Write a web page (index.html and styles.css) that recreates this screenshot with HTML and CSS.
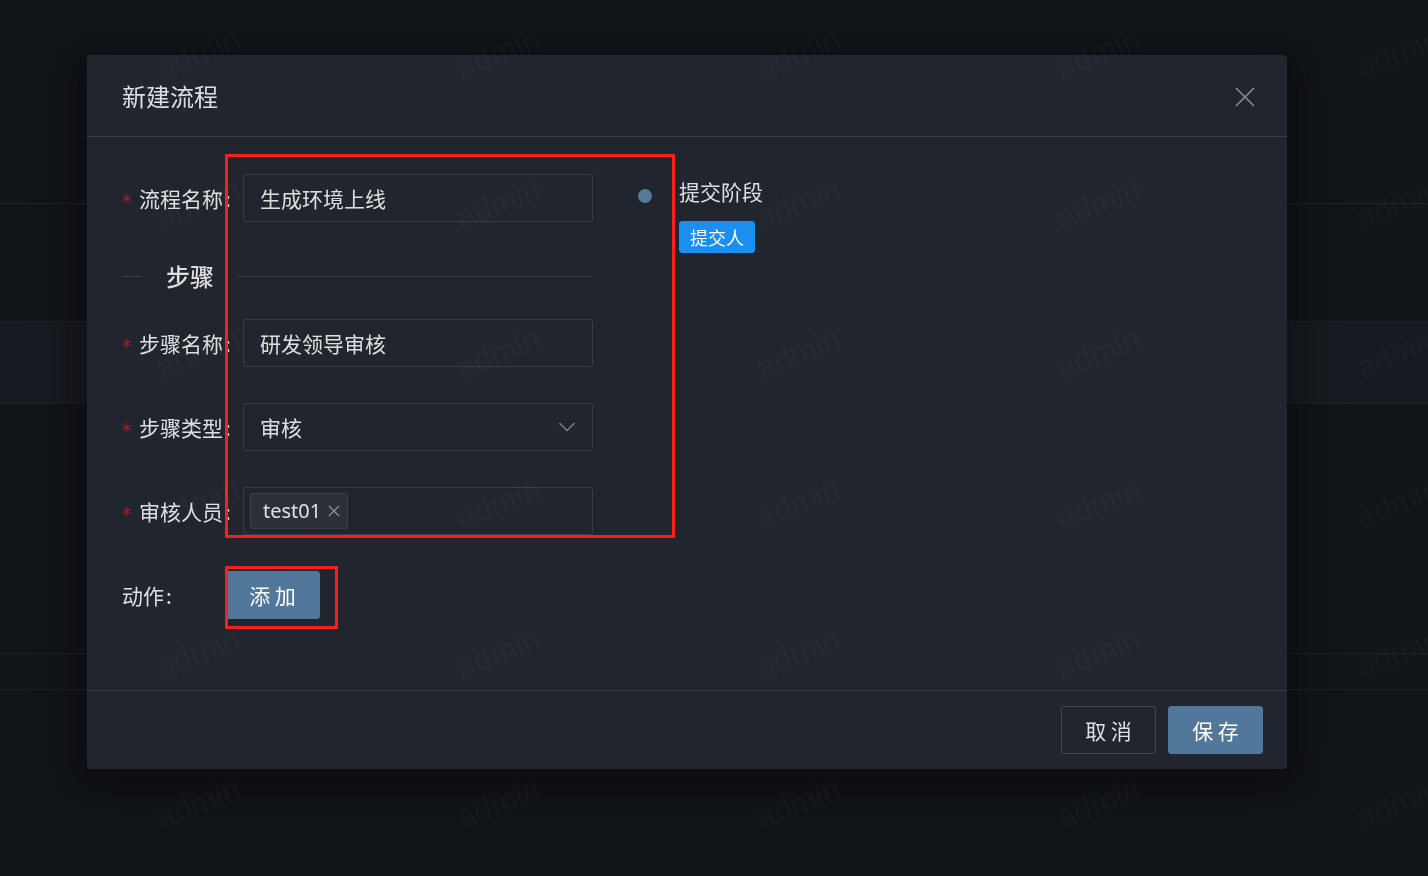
FILE: index.html
```html
<html>
    <head>
        <meta name="viewport" content="width=device-width, initial-scale=1.0">
        <title>新建流程</title>
        <link rel="stylesheet" href="styles.css">
    </head>
    <body>
        <div class="bg-table">
            <div class="bg-row head"></div>
            <div class="bg-row r1"></div>
            <div class="bg-row r2 hover"></div>
            <div class="bg-row r3"></div>
            <div class="bg-row r4"></div>
        </div>

        <div class="mask">
            <div class="modal">
                <div class="modal-header">
                    <div class="modal-title">新建流程</div>
                    <span class="modal-close">
                        <svg width="22" height="22" viewBox="0 0 22 22"><path d="M2 2L20 20M20 2L2 20" stroke="#8a8d93" stroke-width="1.6" fill="none"/></svg>
                    </span>
                </div>
                <div class="modal-body">
                    <div class="left">
                        <div class="form-item">
                            <label class="form-label"><span class="req">*</span>流程名称<span class="colon">:</span></label>
                            <div class="input">生成环境上线</div>
                        </div>

                        <div class="divider">
                            <span class="divider-before"></span>
                            <span class="divider-text">步骤</span>
                            <span class="divider-after"></span>
                        </div>

                        <div class="form-item">
                            <label class="form-label"><span class="req">*</span>步骤名称<span class="colon">:</span></label>
                            <div class="input">研发领导审核</div>
                        </div>
                        <div class="form-item">
                            <label class="form-label"><span class="req">*</span>步骤类型<span class="colon">:</span></label>
                            <div class="input select">
                                <span>审核</span>
                                <svg class="arrow" width="18" height="12" viewBox="0 0 18 12"><path d="M1.5 2L9 9.5L16.5 2" stroke="#7c7f87" stroke-width="1.5" fill="none"/></svg>
                            </div>
                        </div>
                        <div class="form-item">
                            <label class="form-label"><span class="req">*</span>审核人员<span class="colon">:</span></label>
                            <div class="input multi">
                                <span class="sel-tag">test01
                                    <svg width="12" height="12" viewBox="0 0 12 12"><path d="M1 1L11 11M11 1L1 11" stroke="#8c8f95" stroke-width="1.3" fill="none"/></svg>
                                </span>
                            </div>
                        </div>
                        <div class="form-item">
                            <label class="form-label short">动作<span class="colon">:</span></label>
                            <button class="btn primary">添 加</button>
                        </div>
                    </div>

                    <div class="right">
                        <div class="timeline-item">
                            <span class="dot"></span>
                            <div class="timeline-content">
                                <div class="stage">提交阶段</div>
                                <span class="tag">提交人</span>
                            </div>
                        </div>
                    </div>
                </div>
                <div class="modal-footer">
                    <button class="btn">取 消</button>
                    <button class="btn primary">保 存</button>
                </div>

                <div class="mark mark-form"></div>
                <div class="mark mark-btn"></div>
            </div>
        </div>

        <div class="watermark">
            <span>admin</span><span>admin</span><span>admin</span><span>admin</span><span>admin</span>
            <span>admin</span><span>admin</span><span>admin</span><span>admin</span><span>admin</span>
            <span>admin</span><span>admin</span><span>admin</span><span>admin</span><span>admin</span>
            <span>admin</span><span>admin</span><span>admin</span><span>admin</span><span>admin</span>
            <span>admin</span><span>admin</span><span>admin</span><span>admin</span><span>admin</span>
            <span>admin</span><span>admin</span><span>admin</span><span>admin</span><span>admin</span>
        </div>
    </body>
</html>
```

FILE: styles.css
```css
html, body{
    margin: 0px;
    padding: 0px;
    height: 100%;
    width: 100%;
    overflow: hidden;
    background-color: #111418;
    color: rgba(255, 255, 255, 0.85);
    font-family: "Noto Sans CJK SC", "Noto Sans", sans-serif;
}

/* page behind the mask */
.bg-row{
    border-bottom: 1px solid #1f2227;
}
.bg-row.head{ height: 203px; }
.bg-row.r1{ height: 117px; }
.bg-row.r2{ height: 81px; }
.bg-row.r3{ height: 249px; }
.bg-row.r4{ height: 35px; }
.bg-row.hover{
    background-color: #171a20;
}

.mask{
    position: fixed;
    top: 0;
    left: 0;
    width: 100%;
    height: 100%;
    padding: 55px 0 0 87px;
    box-sizing: border-box;
}
.modal{
    position: relative;
    width: 1200px;
    background-color: #21252d;
    border-radius: 3px;
    box-shadow: 0 9px 42px 12px rgba(0, 0, 0, 0.35);
}
.modal-header{
    padding: 24px 36px 24px 35px;
    border-bottom: 1px solid #3b3e46;
}
.modal-title{
    font-size: 24px;
    line-height: 33px;
}
.modal-close{
    position: absolute;
    top: 0;
    right: 0;
    width: 84px;
    height: 83px;
    display: flex;
    align-items: center;
    justify-content: center;
}

.modal-body{
    display: flex;
    padding: 37px 36px 36px 35px;
}
.left{
    width: 471px;
}
.form-item{
    display: flex;
    align-items: center;
    height: 48px;
    margin-bottom: 36px;
    font-size: 21px;
}
.form-item:last-child{
    margin-bottom: 35px;
}
.form-label{
    width: 121px;
    flex: none;
    display: flex;
    align-items: center;
    white-space: nowrap;
    line-height: 30px;
}
.form-label.short{
    width: 103px;
}
.req{
    width: 11px;
    margin-right: 6px;
    margin-top: 6px;
    color: #a8232b;
    font-family: "DejaVu Sans", sans-serif;
    font-size: 19px;
    line-height: 20px;
}
.colon{
    margin-left: 2px;
}
.input{
    width: 350px;
    height: 48px;
    box-sizing: border-box;
    border: 1px solid #3a3d45;
    border-radius: 3px;
    padding: 0 16px;
    display: flex;
    align-items: center;
    line-height: 30px;
}
.select{
    justify-content: space-between;
}
.multi{
    padding: 0 6px;
}
.sel-tag{
    display: inline-flex;
    align-items: center;
    height: 36px;
    box-sizing: border-box;
    padding: 0 7px 0 12px;
    background-color: #2c3039;
    border: 1px solid #3c3f48;
    border-radius: 3px;
    font-family: "Noto Sans", sans-serif;
    font-size: 20px;
}
.sel-tag svg{
    margin-left: 7px;
}

.divider{
    display: flex;
    align-items: center;
    margin-bottom: 25px;
    height: 36px;
}
.divider-before{
    width: 20px;
    border-top: 1px solid #3a3d45;
}
.divider-after{
    flex: 1;
    border-top: 1px solid #3a3d45;
}
.divider-text{
    padding: 0 24px;
    font-size: 24px;
    font-weight: 500;
    line-height: 36px;
}

.btn{
    height: 48px;
    width: 95px;
    box-sizing: border-box;
    border: 1px solid #454649;
    border-radius: 3px;
    background: transparent;
    color: rgba(255, 255, 255, 0.85);
    font-family: "Noto Sans CJK SC", sans-serif;
    font-size: 21px;
    padding: 0;
    outline: none;
}
.btn.primary{
    background-color: #51779a;
    border-color: #51779a;
    color: #fff;
}

.right{
    margin-left: 45px;
}
.timeline-item{
    display: flex;
}
.dot{
    width: 14px;
    height: 14px;
    border-radius: 50%;
    background-color: #567a99;
    margin-top: 15px;
    flex: none;
}
.timeline-content{
    margin-left: 27px;
    padding-top: 1px;
}
.stage{
    font-size: 21px;
    line-height: 33px;
}
.tag{
    display: inline-block;
    margin-top: 13px;
    padding: 0 10px;
    line-height: 30px;
    font-size: 18px;
    color: #fff;
    background-color: #1a8ff0;
    border: 1px solid #1a8ff0;
    border-radius: 3px;
}

.modal-footer{
    display: flex;
    justify-content: flex-end;
    gap: 12px;
    padding: 15px 24px;
    border-top: 1px solid #3b3e46;
}

/* red annotation boxes */
.mark{
    position: absolute;
    border: 3px solid #fa1e1e;
    box-sizing: border-box;
}
.mark-form{
    left: 138px;
    top: 99px;
    width: 450px;
    height: 384px;
}
.mark-btn{
    left: 138px;
    top: 511px;
    width: 113px;
    height: 63px;
}

.watermark{
    position: fixed;
    top: -22px;
    left: 48px;
    display: grid;
    grid-template-columns: repeat(5, 300px);
    grid-template-rows: repeat(6, 150px);
    pointer-events: none;
}
.watermark span{
    display: flex;
    align-items: center;
    justify-content: center;
    font-family: "Liberation Sans", sans-serif;
    font-size: 32px;
    color: rgba(255, 255, 255, 0.022);
    transform: rotate(-22deg);
}
```
